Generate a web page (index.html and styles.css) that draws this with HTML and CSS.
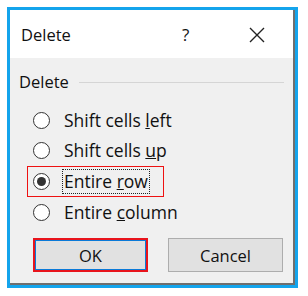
FILE: index.html
```html
<!DOCTYPE html>
<html lang="en">
<head>
    <meta charset="UTF-8">
    <title>Delete</title>
    <link rel="stylesheet" href="styles.css">
</head>
<body>
    <div class="dialog">
        <div class="dialog-inner">
            <div class="title-bar">
                <span class="title">Delete</span>
                <span class="help">?</span>
                <span class="close">
                    <svg width="16" height="16" viewBox="0 0 16 16">
                        <path d="M1 1 L15 15 M15 1 L1 15" stroke="#222" stroke-width="1.4" fill="none"/>
                    </svg>
                </span>
            </div>
            <div class="dialog-body">
                <div class="group-header">
                    <span>Delete</span>
                    <div class="group-line"></div>
                </div>
                <div class="options">
                    <label class="option"><span class="radio"></span><span class="label">Shift cells <u>l</u>eft</span></label>
                    <label class="option"><span class="radio"></span><span class="label">Shift cells <u>u</u>p</span></label>
                    <label class="option option-picked"><span class="radio checked"></span><span class="label focus">Entire <u>r</u>ow</span></label>
                    <label class="option"><span class="radio"></span><span class="label">Entire <u>c</u>olumn</span></label>
                </div>
                <div class="buttons">
                    <button class="btn btn-default">OK</button>
                    <button class="btn">Cancel</button>
                </div>
            </div>
        </div>
    </div>
</body>
</html>
```

FILE: styles.css
```css
body {
    margin: 0;
    background: #fff;
    font-family: 'Open Sans', 'Noto Sans', sans-serif;
    font-size: 15px;
    color: #111;
}
.dialog {
    margin: 7px 0 0 7px;
    width: 285px;
    height: 275px;
    border: 3px solid #14a4ec;
}
.dialog-inner {
    height: 100%;
    box-sizing: border-box;
    border-right: 2px solid #6e6e6e;
    border-bottom: 2px solid #6e6e6e;
    background: #f0f0f0;
    display: flex;
    flex-direction: column;
}
.title-bar {
    background: #fff;
    height: 48px;
    display: flex;
    align-items: center;
    padding-left: 11px;
}
.title {
    flex: 1;
    font-size: 16.5px;
}
.help {
    font-size: 17px;
    width: 67px;
}
.close {
    width: 44px;
    display: flex;
    padding-top: 2px;
}
.dialog-body {
    padding: 12px 0 0 9px;
}
.group-header {
    display: flex;
    align-items: center;
    font-size: 16.5px;
}
.group-line {
    flex: 1;
    height: 1px;
    background: #d5d5d5;
    margin: 2px 9px 0 10px;
}
.options {
    padding: 12px 0 0 14px;
}
.option {
    display: flex;
    align-items: center;
    height: 30.6px;
    width: 137px;
    box-sizing: border-box;
    border: 1px solid transparent;
    margin-left: -6px;
    padding-left: 5px;
    font-size: 17.5px;
    white-space: nowrap;
}
.option-picked {
    border-color: #ee1111;
}
.radio {
    flex: none;
    width: 17px;
    height: 17px;
    box-sizing: border-box;
    border: 1px solid #333;
    border-radius: 50%;
    background: #fff;
    display: flex;
    align-items: center;
    justify-content: center;
    margin-right: 12px;
}
.radio.checked::after {
    content: "";
    width: 9px;
    height: 9px;
    border-radius: 50%;
    background: #333;
}
.label {
    padding: 0 1px;
    border: 1px dotted transparent;
    line-height: 23px;
}
.label.focus {
    border-color: #222;
}
.buttons {
    display: flex;
    gap: 20px;
    padding: 11px 0 0 14px;
}
.btn {
    width: 115px;
    height: 34px;
    font-family: inherit;
    font-size: 16.5px;
    color: #111;
    background: #e1e1e1;
    border: 1px solid #adadad;
}
.btn-default {
    border: 2px solid #e8141c;
    box-shadow: inset 0 0 0 1px #0a7ad8;
}
```
